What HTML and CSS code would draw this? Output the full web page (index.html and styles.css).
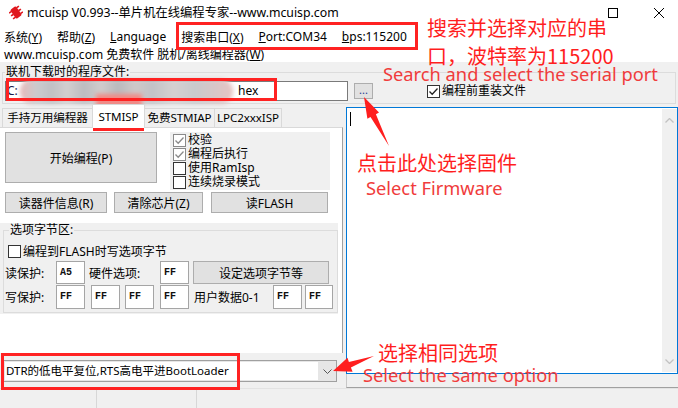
FILE: index.html
```html
<!DOCTYPE html>
<html lang="zh-CN">
<head>
<meta charset="utf-8">
<title>mcuisp</title>
<link rel="stylesheet" href="styles.css">
</head>
<body>
<div class="titlebar">
  <svg class="appicon" viewBox="0 0 14 15"><g transform="rotate(-35 7 7.5)"><rect x="3.5" y="2" width="7" height="11" rx="1.5" fill="#e0181e"/><path d="M1 4h3M1 7.5h3M1 11h3M10 4h3M10 7.5h3M10 11h3" stroke="#e0181e" stroke-width="1.6"/></g></svg>
  <span class="title">mcuisp V0.993--单片机在线编程专家--www.mcuisp.com</span>
  <div class="controls">
    <svg class="ctl-max" viewBox="0 0 10 10"><rect x="0.5" y="0.5" width="9" height="9" fill="none" stroke="#000"/></svg>
    <svg class="ctl-close" viewBox="0 0 10 10"><path d="M0 0L10 10M10 0L0 10" stroke="#000" stroke-width="1"/></svg>
  </div>
</div>
<div class="menubar">
  <span>系统(<u>Y</u>)</span>
  <span>帮助(<u>Z</u>)</span>
  <span><u>L</u>anguage</span>
  <span>搜索串口(<u>X</u>)</span>
  <span><u>P</u>ort:COM34</span>
  <span><u>b</u>ps:115200</span>
</div>
<div class="urlbar">www.mcuisp.com 免费软件 脱机/离线编程器(<u>W</u>)</div>
<div class="filegroup">
  <fieldset class="fg">
    <legend>联机下载时的程序文件:</legend>
    <div class="fg-row">
      <div class="fileinput"><span class="drive">C:</span><span class="ext">hex</span></div>
      <div class="browse">...</div>
      <div class="chkline"><span class="cb"><svg viewBox="0 0 11 11"><polyline points="1.5,5.5 4.2,8.3 9.5,2.5" fill="none" stroke="#222" stroke-width="1.3"/></svg></span>编程前重装文件</div>
    </div>
  </fieldset>
</div>
<div class="lower">
  <div class="leftpane">
    <div class="tabs">
      <div class="tab t1">手持万用编程器</div>
      <div class="tab t2 sel">STMISP</div>
      <div class="tab t3">免费STMIAP</div>
      <div class="tab t4">LPC2xxxISP</div>
    </div>
    <div class="tabpage">
      <div class="row1">
        <div class="btn bigbtn">开始编程(P)</div>
        <div class="chkpanel">
          <div class="chkline"><span class="cb gray"><svg viewBox="0 0 11 11"><polyline points="1.5,5.5 4.2,8.3 9.5,2.5" fill="none" stroke="#8a8a8a" stroke-width="1.3"/></svg></span>校验</div>
          <div class="chkline"><span class="cb gray"><svg viewBox="0 0 11 11"><polyline points="1.5,5.5 4.2,8.3 9.5,2.5" fill="none" stroke="#8a8a8a" stroke-width="1.3"/></svg></span>编程后执行</div>
          <div class="chkline"><span class="cb"></span>使用RamIsp</div>
          <div class="chkline"><span class="cb"></span>连续烧录模式</div>
        </div>
      </div>
      <div class="row2">
        <div class="btn b-read">读器件信息(R)</div>
        <div class="btn b-clear">清除芯片(Z)</div>
        <div class="btn b-flash">读FLASH</div>
      </div>
      <div class="optpanel">
        <fieldset class="og">
          <legend>选项字节区:</legend>
          <div class="chkline opt-chk"><span class="cb"></span>编程到FLASH时写选项字节</div>
          <div class="optrow rowa">
            <span class="lbl l-rp">读保护:</span>
            <span class="hex">A5</span>
            <span class="lbl l-hw">硬件选项:</span>
            <span class="hex">FF</span>
            <div class="btn b-set">设定选项字节等</div>
          </div>
          <div class="optrow rowb">
            <span class="lbl l-rp">写保护:</span>
            <span class="hex">FF</span>
            <span class="hex g6">FF</span>
            <span class="hex g5">FF</span>
            <span class="hex g6">FF</span>
            <span class="lbl l-ud">用户数据0-1</span>
            <span class="hex">FF</span>
            <span class="hex g3">FF</span>
          </div>
        </fieldset>
      </div>
    </div>
    <div class="comboarea">
      <div class="combo">
        <div class="combo-text">DTR的低电平复位,RTS高电平进BootLoader</div>
        <div class="combo-btn"><svg viewBox="0 0 9 5"><polyline points="0.5,0.5 4.5,4.5 8.5,0.5" fill="none" stroke="#555"/></svg></div>
      </div>
    </div>
  </div>
  <div class="rightpane">
    <div class="memo">
      <div class="memo-text"><span class="caret"></span></div>
      <div class="vscroll">
        <svg viewBox="0 0 9 5"><polyline points="0.5,4.5 4.5,0.5 8.5,4.5" fill="none" stroke="#c2c2c2" stroke-width="1.3"/></svg>
        <svg viewBox="0 0 9 5"><polyline points="0.5,0.5 4.5,4.5 8.5,0.5" fill="none" stroke="#c2c2c2" stroke-width="1.3"/></svg>
      </div>
    </div>
    <div class="hstrip"></div>
  </div>
</div>
<div class="statusbar">
  <div class="sb sb1"></div>
  <div class="sb sb2"></div>
  <div class="sb sb3"></div>
</div>

<div class="blur"></div>
<div class="blur2"></div>
<div class="redbox rb-menu"></div>
<div class="redbox rb-file"></div>
<div class="redbox rb-tab"></div>
<div class="redbox rb-combo"></div>

<svg class="arrows" viewBox="0 0 678 408">
  <polygon points="389,146 375.9,114.3 379,112.5 364,97 367.4,118.8 370.5,117.1" fill="#ff1e1e"/>
  <polygon points="374,356 348.9,362 347.5,357.8 333,371 352.6,371.8 350.9,367.6" fill="#ff1e1e"/>
</svg>

<div class="ann ann-cn1">搜索并选择对应的串<br>口，波特率为115200</div>
<div class="ann ann-en1">Search and select the serial port</div>
<div class="ann ann-cn2">点击此处选择固件</div>
<div class="ann ann-en2">Select Firmware</div>
<div class="ann ann-cn3">选择相同选项</div>
<div class="ann ann-en3">Select the same option</div>
</body>
</html>
```

FILE: styles.css
```css
* { box-sizing: border-box; margin: 0; padding: 0; }
html, body { width: 678px; height: 408px; overflow: hidden; }
body {
  position: relative;
  font-family: "Noto Sans", "Noto Sans CJK SC", sans-serif;
  font-size: 12px;
  color: #000;
  background: #f0f0f0;
}
u { text-decoration: underline; text-underline-offset: 1px; }

/* title bar */
.titlebar { height: 25px; background: #fff; display: flex; align-items: center; padding-left: 9px; }
.appicon { width: 14px; height: 15px; margin-right: 4px; }
.title { line-height: 16px; font-size: 12.3px; }
.controls { margin-left: auto; display: flex; align-items: center; }
.ctl-max { width: 10px; height: 10px; margin-right: 36px; }
.ctl-close { width: 10px; height: 10px; margin-right: 14px; }

/* menu */
.menubar { height: 23px; background: #fff; display: flex; align-items: center; padding-left: 4px; gap: 15px; }
.urlbar { height: 14px; line-height: 14px; background: #fff; padding-left: 4px; }

/* file group */
.filegroup { height: 42px; padding: 3px 2px 0 2px; }
.fg { height: 39px; border: 1px solid #dcdcdc; padding: 0; }
.fg legend { margin-left: 2px; padding: 0 1px; line-height: 14px; }
.fg-row { display: flex; align-items: center; height: 20px; margin-top: 2px; }
.fileinput {
  width: 343px; height: 20px; margin-left: 2px;
  background: #fff; border: 1px solid #7a7a7a;
  display: flex; align-items: center; padding-left: 1px; line-height: 16px;
}
.drive { color: #1a1a4a; width: 12px; }
.ext { margin-left: 219px; }
.browse {
  margin-left: 6px; width: 19px; height: 16px;
  background: #e1e1e1; border: 1px solid #adadad;
  color: #1b3f8f; font-size: 11px; line-height: 12px; text-align: center;
}
.fg-row .chkline { margin-left: 54px; }

/* checkbox */
.chkline { display: flex; align-items: center; height: 14px; line-height: 14px; white-space: nowrap; }
.cb {
  width: 13px; height: 13px; margin-right: 2px; flex: none;
  border: 1px solid #333; background: #fff;
  display: inline-flex; align-items: center; justify-content: center;
}
.cb svg { width: 11px; height: 11px; }
.cb.gray { border-color: #8a8a8a; }

/* lower area */
.lower { display: flex; height: 284px; }
.leftpane { width: 343px; display: flex; flex-direction: column; }
.tabs { height: 23px; display: flex; align-items: flex-end; padding-left: 2px; }
.tab {
  height: 19px; line-height: 18px; text-align: center; white-space: nowrap;
  background: #f0f0f0; border: 1px solid #d9d9d9; border-bottom: none;
  margin-left: -1px; font-size: 11.6px; letter-spacing: -0.1px;
}
.tab.t1 { width: 91px; margin-left: 0; }
.tab.t2 { width: 53px; }
.tab.t3 { width: 71px; }
.tab.t4 { width: 68px; }
.tab.sel {
  line-height: 24px; background: #fff; position: relative; z-index: 1;
  margin-bottom: -1px; height: 24px;
}

.tabpage {
  height: 226px; background: #fff;
  border-top: 1px solid #d9d9d9; border-right: 1px solid #a0a0a0;
  padding: 4px 0 0 5px;
}
.row1 { display: flex; height: 58px; }
.btn {
  background: #e1e1e1; border: 1px solid #adadad;
  display: flex; align-items: center; justify-content: center; white-space: nowrap;
}
.bigbtn { width: 152px; height: 51px; }
.chkpanel {
  margin-left: 13px; width: 160px; height: 58px; background: #f0f0f0;
  padding: 1px 0 0 3px; display: flex; flex-direction: column;
}
.row2 { display: flex; height: 21px; margin-top: 2px; }
.b-read { width: 102px; }
.b-clear { width: 89px; margin-left: 7px; }
.b-flash { width: 117px; margin-left: 8px; }

.optpanel {
  margin: 10px 0 0 -5px; width: 338px; height: 91px;
  background: #f0f0f0; padding-left: 3px;
}
.og { height: 90px; border: 1px solid #dcdcdc; padding: 0; }
.og legend { margin-left: 5px; padding: 0 1px; line-height: 14px; }
.opt-chk { margin-top: 7px; padding-left: 4px; height: 15px; }
.optrow { display: flex; align-items: center; }
.rowa { height: 23px; margin-top: 2px; }
.rowb { height: 24px; margin-top: 1px; }
.lbl { white-space: nowrap; }
.l-rp { width: 52px; padding-left: 1px; }
.l-hw { width: 71px; margin-left: 4px; }
.l-ud { width: 79px; margin-left: 5px; }
.hex {
  width: 29px; height: 100%; background: #fff; border: 1px solid #a5a5a5;
  font-family: "Liberation Mono", monospace; font-weight: bold; font-size: 10px;
  line-height: 21px; padding-left: 3px; color: #101010;
}
.g6 { margin-left: 6px; }
.g5 { margin-left: 5px; }
.g3 { margin-left: 3px; width: 28px; }
.b-set { width: 136px; height: 23px; margin-left: 4px; }

.comboarea { height: 35px; background: #f0f0f0; padding: 7px 0 0 3px; }
.combo {
  width: 334px; height: 22px; border: 1px solid #a0a0a0; background: #e6e6e6;
  display: flex;
}
.combo-text {
  flex: 1; margin: 1px 0 1px 1px; background: #fff; font-size: 11.5px;
  line-height: 18px; padding-left: 1px; white-space: nowrap; overflow: hidden;
}
.combo-btn { width: 18px; display: flex; align-items: center; justify-content: center; }
.combo-btn svg { width: 9px; height: 5px; }

.rightpane { flex: 1; margin-left: 3px; display: flex; flex-direction: column; }
.memo {
  margin-top: 3px; height: 267px; border: 1px solid #0078d7; background: #fff;
  display: flex;
}
.memo-text { flex: 1; padding: 4px 0 0 3px; }
.caret { display: block; width: 1px; height: 14px; background: #000; }
.vscroll {
  width: 15px; background: #f0f0f0; margin: 1px 0;
  display: flex; flex-direction: column; justify-content: space-between; align-items: center;
  padding: 9px 0 8px;
}
.vscroll svg { width: 9px; height: 5px; }
.hstrip { height: 14px; border-left: 1px solid #c8c8c8; border-bottom: 1px solid #a0a0a0; background: #f0f0f0; }

.statusbar { height: 20px; display: flex; background: #f0f0f0; border-top: 1px solid #e3e3e3; }
.sb { height: 100%; border-right: 1px solid #d7d7d7; }
.sb1 { width: 97px; }
.sb2 { width: 100px; }
.sb3 { flex: 1; border-right: none; }

/* annotation overlay */
.blur {
  position: absolute; left: 20px; top: 79px; width: 213px; height: 25px;
  border-radius: 12px;
  background: linear-gradient(90deg, #e7b9b9 0%, #cbcbce 8%, #c0c0c4 15%, #d3cfcf 22%, #bcbcc0 30%, #d1cccc 38%, #b9b9bd 46%, #cfc9c9 54%, #c2c2c6 62%, #d5d1d1 72%, #c9c9cc 82%, #e6c4c4 100%);
  filter: blur(2px);
}
.blur2 {
  position: absolute; left: 96px; top: 94px; width: 46px; height: 14px;
  background: #f08a86; filter: blur(2px);
}
.redbox { position: absolute; border: 3px solid #ff2222; }
.rb-menu { left: 176px; top: 22px; width: 242px; height: 28px; }
.rb-file { left: 6px; top: 78px; width: 271px; height: 23px; }
.rb-tab { left: 93px; top: 105px; width: 51px; height: 26px; }
.rb-combo { left: 1px; top: 353px; width: 239px; height: 37px; }
.arrows { position: absolute; left: 0; top: 0; width: 678px; height: 408px; pointer-events: none; }

.ann { position: absolute; white-space: nowrap; }
.ann-cn1, .ann-cn2, .ann-cn3 { font-family: "Noto Sans CJK SC", sans-serif; font-size: 20px; color: #ff1e1e; }
.ann-en1, .ann-en2, .ann-en3 { font-family: "Noto Sans", sans-serif; font-size: 18.3px; line-height: 24px; color: #f03c3c; }
.ann-cn1 { left: 427px; top: 14px; line-height: 28px; }
.ann-en1 { left: 383px; top: 62px; }
.ann-cn2 { left: 357px; top: 152px; line-height: 22px; }
.ann-en2 { left: 366px; top: 176px; }
.ann-cn3 { left: 378px; top: 342px; line-height: 22px; }
.ann-en3 { left: 363px; top: 363px; }
```
